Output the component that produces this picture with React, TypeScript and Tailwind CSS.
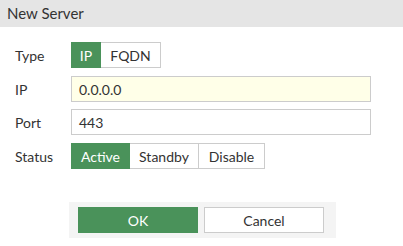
export default function App() {
  const font = { fontFamily: "Lato, 'Noto Sans', sans-serif" };
  return (
    <div className="w-[403px] h-[246px] bg-white text-[#333] text-[14px] overflow-hidden" style={font}>
      <div className="h-[27px] bg-[#e5e5e5] flex items-center pl-[7px] text-[15px] text-[#333]">New Server</div>
      <div className="pl-[15px] pt-[15px] flex flex-col">
        <div className="flex items-center h-[26px]">
          <div className="w-[56px]">Type</div>
          <div className="flex h-[26px]">
            <div className="w-[30px] bg-[#4a925a] text-white flex items-center justify-center">IP</div>
            <div className="w-[60px] border border-l-0 border-[#ccc] flex items-center justify-center">FQDN</div>
          </div>
        </div>
        <div className="flex items-center h-[26px] mt-[8px]">
          <div className="w-[56px]">IP</div>
          <div className="w-[300px] h-[26px] border border-[#ccc] bg-[#ffffe8] flex items-center pl-[7px]">0.0.0.0</div>
        </div>
        <div className="flex items-center h-[26px] mt-[7px]">
          <div className="w-[56px]">Port</div>
          <div className="w-[300px] h-[26px] border border-[#ccc] bg-white flex items-center pl-[7px]">443</div>
        </div>
        <div className="flex items-center h-[26px] mt-[8px]">
          <div className="w-[56px]">Status</div>
          <div className="flex h-[26px]">
            <div className="w-[59px] bg-[#4a925a] text-white flex items-center justify-center">Active</div>
            <div className="w-[69px] border border-l-0 border-[#ccc] flex items-center justify-center">Standby</div>
            <div className="w-[66px] border border-l-0 border-[#ccc] flex items-center justify-center">Disable</div>
          </div>
        </div>
      </div>
      <div className="ml-[69px] mt-[33px] w-[267px] h-[36px] bg-[#f4f4f4] flex items-center pl-[9px] gap-[6px]">
        <div className="w-[120px] h-[26px] bg-[#4a925a] text-white flex items-center justify-center">OK</div>
        <div className="w-[120px] h-[26px] bg-white border border-[#ccc] flex items-center justify-center">Cancel</div>
      </div>
    </div>
  );
}
